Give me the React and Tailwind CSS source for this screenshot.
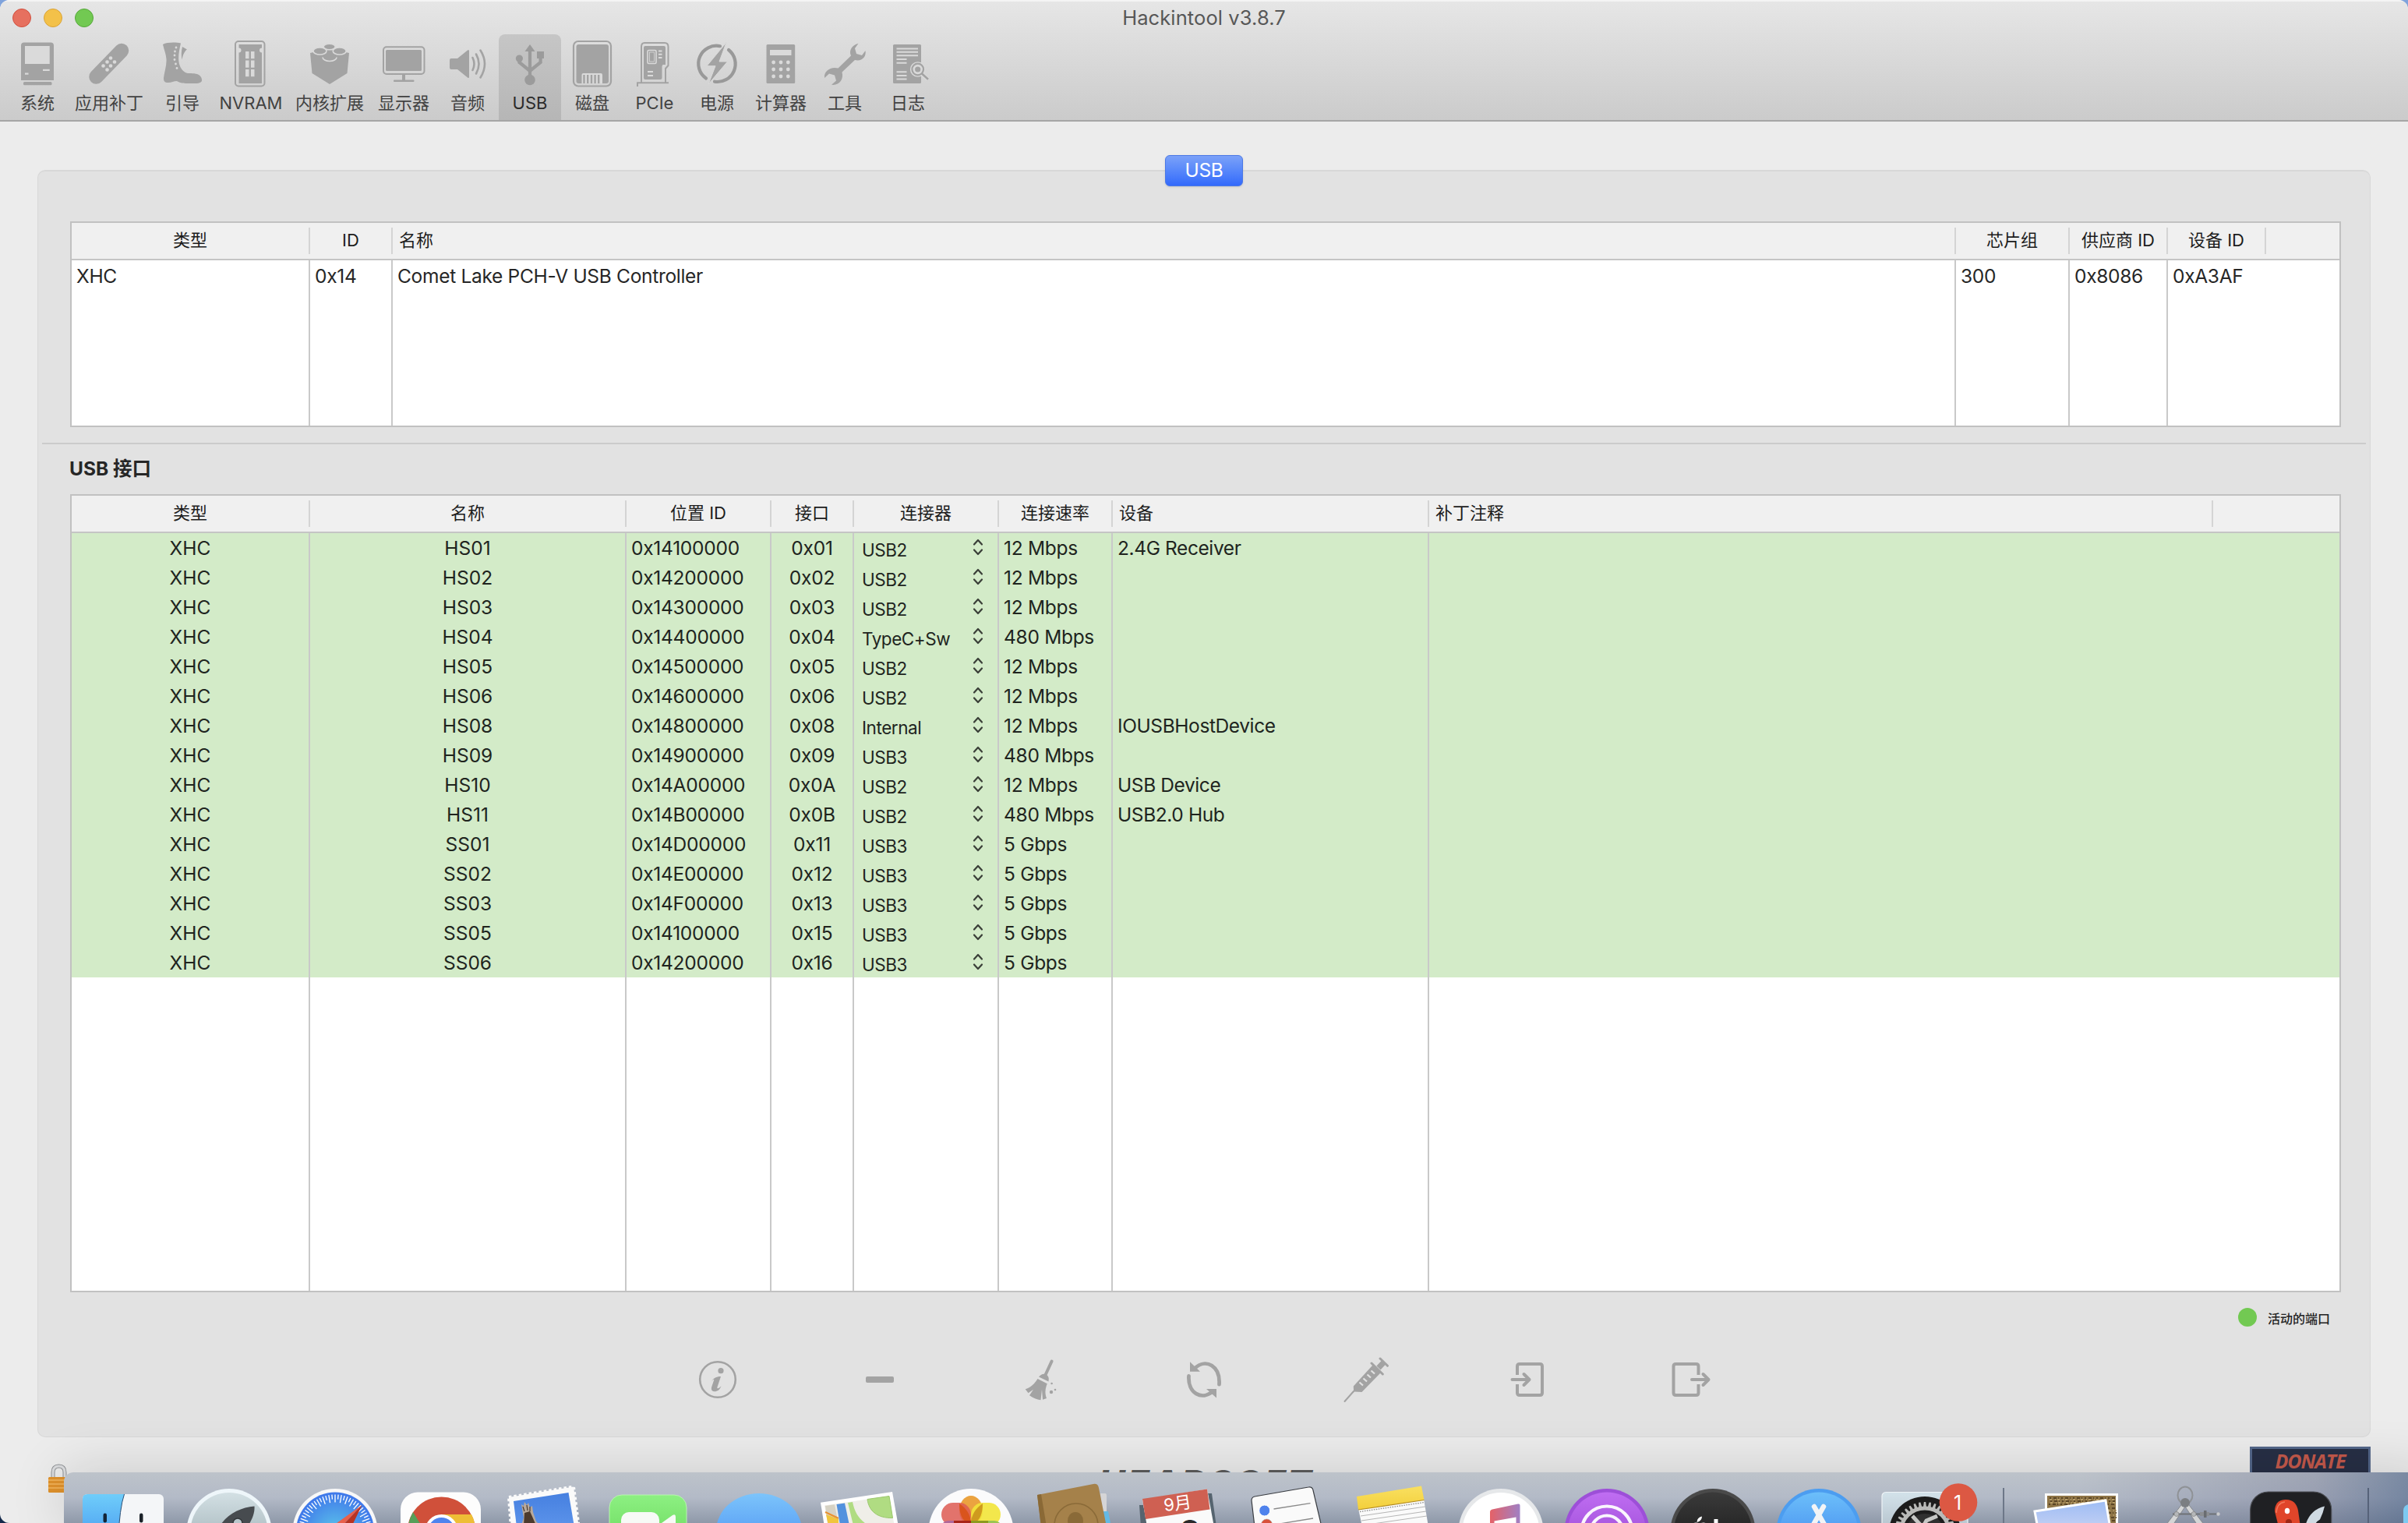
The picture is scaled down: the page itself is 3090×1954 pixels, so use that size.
import React from "react";

const LIGHT = "#dadada";

const toolbar = [
  {
    label: "系统", cx: 48, width: "w-[60px]",
    icon: (
      <>
        <path d="M31 54.5h34a4 4 0 0 1 4 4V103H27V58.500a4 4 0 0 1 4-4z" />
        <rect x="30" y="105" width="36.500" height="4.300" rx="1.500" />
        <g fill={LIGHT}>
          <rect x="32" y="59" width="31.700" height="23" />
          <rect x="55" y="88.800" width="8.700" height="2.200" />
          <rect x="32" y="93.500" width="4.500" height="2.200" />
        </g>
      </>
    ),
  },
  {
    label: "应用补丁", cx: 140, width: "w-[124px]",
    icon: (
      <>
        <path d="M123.500 98.500 156 65" stroke="currentColor" strokeWidth="18.500" strokeLinecap="round" />
        <g fill={LIGHT}>
          {[[142, 74.5], [137.5, 79.5], [147, 79.5], [132.500, 84.500], [142, 84.500], [137.500, 89.500]].map(([x, y]) => (
            <circle key={x + "-" + y} cx={x} cy={y} r="2.300" />
          ))}
        </g>
      </>
    ),
  },
  {
    label: "引导", cx: 234, width: "w-[64px]",
    icon: (
      <>
        <path d="M209 57c5-3 17-3 23-1.500C230 64 228 74 230 82c2 7 6 11 11 12 8 0 17 0 18 8 1 6-8 5-15 5-8 0-12 0-17-3-4 0-7 2-11 2-5 0-6-2-6-6 1-8 4-16 3.500-24-.5-7-3-12-4.500-19z" />
        <path d="M234 60l6 3.500c-3 2-5 6-6.500 13-1-5-1-11 .5-16.500z" />
        <g fill={LIGHT}>
          {[[226, 61], [224.5, 66], [224, 71], [224, 76.500], [225.5, 82], [227, 87.500]].map(([x, y]) => (
            <circle key={y} cx={x} cy={y} r="1.400" />
          ))}
        </g>
      </>
    ),
  },
  {
    label: "NVRAM", cx: 322, width: "w-[112px]",
    icon: (
      <>
        <rect x="302" y="53" width="37.500" height="57.500" rx="4" fill="none" stroke="currentColor" strokeWidth="2" />
        <path d="M306.500 57h29.500v4.500a3 3 0 0 0 0 6V107h-29.500V67.500a3 3 0 0 0 0-6z" />
        <g fill={LIGHT}>
          {[66, 77.500, 89].map((y) => (
            <React.Fragment key={y}>
              <rect x="315" y={y} width="4.500" height="9.200" />
              <rect x="322" y={y} width="4.500" height="9.200" />
            </React.Fragment>
          ))}
        </g>
      </>
    ),
  },
  {
    label: "内核扩展", cx: 423, width: "w-[90px]",
    icon: (
      <>
        <path d="M398 68l25-6 25 6-2.500 26L423 108l-22.500-14z" />
        <g stroke={LIGHT} strokeWidth="1.600">
          <ellipse cx="422.700" cy="60" rx="7.500" ry="3.800" />
          <ellipse cx="410.500" cy="65.500" rx="8.500" ry="4.500" />
          <ellipse cx="435.700" cy="65.500" rx="8.500" ry="4.500" />
          <path d="M414 73.500a9 5 0 0 0 18 0" fill="none" />
        </g>
      </>
    ),
  },
  {
    label: "显示器", cx: 518, width: "w-[100px]",
    icon: (
      <>
        <rect x="492" y="60.300" width="52.500" height="34.700" rx="4" fill="none" stroke="currentColor" strokeWidth="2" />
        <rect x="495" y="64" width="46" height="27" rx="1.500" />
        <rect x="516" y="95" width="4" height="8" />
        <rect x="505" y="102.500" width="26.500" height="2.500" rx="1" />
      </>
    ),
  },
  {
    label: "音频", cx: 600, width: "w-[64px]",
    icon: (
      <>
        <path d="M579 75h8l13-10.500q2-1.500 2 1V98.500q0 2.500-2 1L587 89h-8q-2 0-2-2V77q0-2 2-2z" />
        <g fill="none" stroke="currentColor" strokeWidth="2.600" strokeLinecap="round">
          <path d="M606.500 74q4 8 0 16" />
          <path d="M611 69.500q7 12.500 0 25" />
          <path d="M616.500 64.500q11 17.500 0 35" />
        </g>
      </>
    ),
  },
  {
    label: "USB", cx: 680, width: "w-[80px]", selected: true,
    icon: (
      <>
        <path d="M680 57l6.500 9h-13z" />
        <circle cx="666.400" cy="75" r="4.600" />
        <rect x="689" y="66" width="9" height="9" />
        <circle cx="680" cy="102.500" r="6.800" />
        <g fill="none" stroke="currentColor" strokeWidth="4.200">
          <path d="M680 64v38" />
          <path d="M666.400 76v4l13.600 11 13.600-11v-6" />
        </g>
      </>
    ),
  },
  {
    label: "磁盘", cx: 760, width: "w-[80px]",
    icon: (
      <>
        <rect x="736" y="53" width="48" height="57.500" rx="6" fill="none" stroke="currentColor" strokeWidth="2.200" />
        <rect x="739.500" y="57" width="41.500" height="50" rx="3" />
        <path d="M746.500 107V96q0-2 2-2h22.500q2 0 2 2v11z" fill={LIGHT} />
        <path d="M749.500 96v11M754.200 96v11M759 96v11M763.600 96v11M768.200 96v11" stroke="currentColor" strokeWidth="2.400" />
      </>
    ),
  },
  {
    label: "PCIe", cx: 840, width: "w-[80px]",
    icon: (
      <>
        <path d="M823 106V60q0-5 4-5h26q4.500 0 4.500 5v24l-3.500 4v18" fill="none" stroke="currentColor" strokeWidth="2" />
        <path d="M828 59h24q2 0 2 2v22h-3.500l-1 2v15q0 2-2 2H828q-2 0-2-2V61q0-2 2-2z" />
        <path d="M858 106.300H818V111" fill="none" stroke="currentColor" strokeWidth="2" />
        <rect x="831" y="64.500" width="11" height="17" rx="1.500" fill="none" stroke={LIGHT} strokeWidth="1.600" />
        <rect x="833.500" y="67" width="6" height="12" fill="currentColor" stroke={LIGHT} strokeWidth=".8" />
        <path d="M845 65.500h4.500M845 69.800h4.500M845 74h4.500M831 92h7M831 97h7" stroke={LIGHT} strokeWidth="1.900" />
      </>
    ),
  },
  {
    label: "电源", cx: 920, width: "w-[80px]",
    icon: (
      <>
        <path d="M924 59.200A23 23 0 0 0 906 100.500M917 104.700A23 23 0 0 0 935 64" fill="none" stroke="#999" strokeWidth="4.200" strokeLinecap="round" />
        <path d="M932 54.500L907 84.700h11L909 108l24.500-29H923z" stroke={LIGHT} strokeWidth="1" />
      </>
    ),
  },
  {
    label: "计算器", cx: 1002, width: "w-[84px]",
    icon: (
      <>
        <rect x="983.500" y="57" width="36.700" height="50" rx="1.500" />
        <g fill={LIGHT}>
          <rect x="988" y="64" width="27.500" height="7" />
          {[80, 89, 98].map((y) => [992.6, 1002, 1011.3].map((x) => <circle key={x + "-" + y} cx={x} cy={y} r="2.400" />))}
        </g>
      </>
    ),
  },
  {
    label: "工具", cx: 1084, width: "w-[80px]",
    icon: (
      <path d="M1101.500 55.800C1093 58 1089 65 1092 71.500L1075.500 87.500C1066 85 1057 91 1058 100L1064 94.500 1071 96.500 1073 103.500 1067 108.800C1077 110 1083 102 1080.500 92.500L1097 77C1106 79 1112 73 1110.500 65L1106 71 1099 69 1097 62z" />
    ),
  },
  {
    label: "日志", cx: 1165, width: "w-[82px]",
    icon: (
      <>
        <rect x="1146" y="57" width="36" height="50" rx="1.500" />
        <path d="M1150.500 62.500h27.500M1150.500 66.800h27.500M1150.500 71.200h27.500M1150.500 76h13M1150.500 80.800h13M1150.500 92.300h13M1150.500 97h13M1150.500 101.500h13" stroke={LIGHT} strokeWidth="1.900" />
        <circle cx="1177.700" cy="89" r="9.800" fill={LIGHT} />
        <path d="M1183 95l7.500 6.500" stroke={LIGHT} strokeWidth="5" />
        <circle cx="1177.700" cy="89" r="7.300" fill="none" stroke="currentColor" strokeWidth="2.200" />
        <circle cx="1177.700" cy="89" r="3.600" />
        <path d="M1183 94.500l8 7.300" stroke="currentColor" strokeWidth="2.600" />
      </>
    ),
  },
];

function ToolbarItem({ item }) {
  return (
    <div className={`${item.width} ${item.selected ? "rounded-t-lg bg-gradient-to-b from-[#c6c6c6] to-[#b6b6b6] text-[#2b2b2b]" : "text-[#424242]"} ${item.label === "音频" ? "mr-2" : ""} flex h-[110px] flex-col items-center pt-1.5`}>
      <svg width="70" height="64" viewBox={`${item.cx - 35} 50 70 64`} fill="currentColor" className={item.selected ? "text-[#9b9b9b]" : "text-[#a3a3a3]"}>
        {item.icon}
      </svg>
      <span className="mt-[3px] whitespace-nowrap text-[22px] leading-[30px]">{item.label}</span>
    </div>
  );
}

const controllerCols = [
  { title: "类型", w: "w-[306px]", align: "justify-center", value: "XHC" },
  { title: "ID", w: "w-[106px]", align: "justify-center", value: "0x14" },
  { title: "名称", w: "w-[2006px]", align: "pl-2", value: "Comet Lake PCH-V USB Controller" },
  { title: "芯片组", w: "w-[146px]", align: "justify-center", value: "300" },
  { title: "供应商 ID", w: "w-[126px]", align: "justify-center", value: "0x8086" },
  { title: "设备 ID", w: "w-[126px]", bodyW: "w-[220px]", align: "justify-center", value: "0xA3AF" },
];

const portCols = [
  { title: "类型", w: "w-[306px]", align: "justify-center" },
  { title: "名称", w: "w-[406px]", align: "justify-center" },
  { title: "位置 ID", w: "w-[186px]", align: "justify-center" },
  { title: "接口", w: "w-[106px]", align: "justify-center" },
  { title: "连接器", w: "w-[186px]", align: "justify-center" },
  { title: "连接速率", w: "w-[146px]", align: "justify-center" },
  { title: "设备", w: "w-[406px]", align: "pl-2" },
  { title: "补丁注释", w: "w-[1006px]", align: "pl-2" },
];

const ports = [
  ["HS01", "0x14100000", "0x01", "USB2", "12 Mbps", "2.4G Receiver"],
  ["HS02", "0x14200000", "0x02", "USB2", "12 Mbps", ""],
  ["HS03", "0x14300000", "0x03", "USB2", "12 Mbps", ""],
  ["HS04", "0x14400000", "0x04", "TypeC+Sw", "480 Mbps", ""],
  ["HS05", "0x14500000", "0x05", "USB2", "12 Mbps", ""],
  ["HS06", "0x14600000", "0x06", "USB2", "12 Mbps", ""],
  ["HS08", "0x14800000", "0x08", "Internal", "12 Mbps", "IOUSBHostDevice"],
  ["HS09", "0x14900000", "0x09", "USB3", "480 Mbps", ""],
  ["HS10", "0x14A00000", "0x0A", "USB2", "12 Mbps", "USB Device"],
  ["HS11", "0x14B00000", "0x0B", "USB2", "480 Mbps", "USB2.0 Hub"],
  ["SS01", "0x14D00000", "0x11", "USB3", "5 Gbps", ""],
  ["SS02", "0x14E00000", "0x12", "USB3", "5 Gbps", ""],
  ["SS03", "0x14F00000", "0x13", "USB3", "5 Gbps", ""],
  ["SS05", "0x14100000", "0x15", "USB3", "5 Gbps", ""],
  ["SS06", "0x14200000", "0x16", "USB3", "5 Gbps", ""],
];

function HeaderRow({ cols }) {
  return (
    <div className="flex h-[48px] shrink-0 items-center border-b-2 border-[#c5c5c5] bg-[#f0f0f0] text-[22px] text-[#1c1c1c]">
      {cols.map((c) => (
        <div key={c.title} className={`${c.w} ${c.align} flex h-[34px] shrink-0 items-center whitespace-nowrap border-r-2 border-[#d4d4d4] pb-[2px]`}>
          {c.title}
        </div>
      ))}
    </div>
  );
}

const cell = "flex shrink-0 items-center whitespace-nowrap border-r-2 border-[#c9c9c9]";

function PortRow({ port }) {
  const [name, location, index, connector, speed, device] = port;
  return (
    <div className="flex h-[38px] shrink-0 bg-[#d3ebc8]">
      <div className={`${cell} w-[306px] justify-center pt-px`}>XHC</div>
      <div className={`${cell} w-[406px] justify-center pt-px`}>{name}</div>
      <div className={`${cell} w-[186px] pl-1.5 pt-px tracking-[-0.250px]`}>{location}</div>
      <div className={`${cell} w-[106px] justify-center pt-px tracking-[-0.2px]`}>{index}</div>
      <div className={`${cell} w-[186px] justify-between pl-2.5 pr-[18px] pt-px`}>
        <span className="pt-1 text-[22.500px] leading-8 tracking-[-0.450px]">{connector}</span>
        <svg width="14" height="22" viewBox="0 0 14 22" fill="none" stroke="#3a3f38" strokeWidth="2.200" strokeLinecap="round" strokeLinejoin="round" className="-mt-1">
          <path d="M2 7.500L7 2l5 5.500M2 14.500L7 20l5-5.500" />
        </svg>
      </div>
      <div className={`${cell} w-[146px] pl-1.5 pt-px tracking-[-0.3px]`}>{speed}</div>
      <div className={`${cell} w-[406px] pl-1.5 pt-px tracking-[-0.4px]`}>{device}</div>
    </div>
  );
}

const actions = [
  ["info",
    <>
      <circle cx="30" cy="30" r="22.800" fill="none" stroke="currentColor" strokeWidth="2.600" />
      <circle cx="34" cy="18.700" r="3.600" />
      <path d="M22 32.500c2-4 6-6.500 12-6.500L29.500 39.500c-.8 3 2 2.200 5-1.200-2 5-5 7-8.500 7-4 0-4.800-2.500-3.600-6.500l2.800-8.200c.4-1.500-1.400-.8-3.200 1.900z" />
    </>],
  ["remove", <rect x="12" y="26" width="36" height="8" rx="2" />],
  ["clean",
    <>
      <path d="M42.600 6.500L34.500 24" stroke="currentColor" strokeWidth="4" strokeLinecap="round" />
      <path d="M26 26.500q4-5 9-3.500 5 3 3.500 9.500z" />
      <path d="M24.500 29l12.300 6.300c-3 7-3 13-.8 18.700l-5 1.800-1-13-1.500 13.500c-5-.5-10-3-14.500-6l5-7.500-6.500 4.500-3.800-5c7-2 12-7 15.800-13.300z" />
      <circle cx="42.600" cy="35" r="1.300" /><circle cx="47" cy="43" r="1.300" /><circle cx="42" cy="46" r="2.200" />
    </>],
  ["refresh",
    <>
      <path d="M18 15.500C33 2 51 13 49.500 36M10.500 25.500C9 47 27 58 42 44.500" fill="none" stroke="currentColor" strokeWidth="4.800" strokeLinecap="round" />
      <path d="M12 7.300v12.400h13zM46 53.500V42H33z" />
    </>],
  ["inject",
    <>
      <path d="M2.500 58L14 45" stroke="currentColor" strokeWidth="2" strokeLinecap="round" />
      <path d="M13.800 38.500L38.200 11.700l10.500 9.500L24.500 46l-9.500-.5-4 3.500 3-5z" />
      <path d="M37 9l14.300 14M48 3l9.500 9.300" stroke="currentColor" strokeWidth="3" strokeLinecap="round" />
      <path d="M46 15l7-7.500" stroke="currentColor" strokeWidth="7" />
      <path d="M21.500 33.500l4.500 4M26.500 28.500l4.500 4M31.500 23.500l4.500 4M36.500 18.500l4.500 4" stroke="#e2e2e2" strokeWidth="2.200" />
    </>],
  ["import",
    <g fill="none" stroke="currentColor" strokeWidth="4">
      <path d="M16 24V13q0-3 3-3h26q3 0 3 3v34q0 3-3 3H19q-3 0-3-3V36" />
      <path d="M9.500 30H31M24.500 23l7 7-7 7" strokeLinecap="round" strokeLinejoin="round" />
    </g>],
  ["export",
    <g fill="none" stroke="currentColor" strokeWidth="4">
      <path d="M40.500 24V13q0-3-3-3H11.500q-3 0-3 3v34q0 3 3 3h26q3 0 3-3V36" />
      <path d="M32 30H53M46.500 23l7 7-7 7" strokeLinecap="round" strokeLinejoin="round" />
    </g>],
];

function Gradient({ id, from, to }) {
  return (
    <linearGradient id={id} x1="0" y1="0" x2="0" y2="1">
      <stop offset="0" stopColor={from} />
      <stop offset="1" stopColor={to} />
    </linearGradient>
  );
}

const ticks = Array.from({ length: 72 }, (_, i) => i * 5);
const teeth = Array.from({ length: 36 }, (_, i) => i * 10);

const dockIcons = [
  ["finder",
    <>
      <defs><Gradient id="fi" from="#6fcdfa" to="#4b9df0" /></defs>
      <rect x="16" y="28" width="104" height="60" rx="6" fill="#f4f6f8" />
      <path d="M22 28h47.500q-6 17-8 60H16V34q0-6 6-6z" fill="url(#fi)" />
      <path d="M69.500 28q-6 17-8 60" fill="none" stroke="#2c4f75" strokeWidth="1" />
      <rect x="42.500" y="52.500" width="4.500" height="12" rx="2.200" fill="#132437" />
      <rect x="89" y="52.500" width="4.500" height="12" rx="2.200" fill="#1b2229" />
    </>],
  ["launchpad",
    <>
      <defs><Gradient id="lp" from="#d3e0e4" to="#8ea0a6" /></defs>
      <circle cx="68" cy="75.500" r="54.500" fill="#eef6fa" />
      <circle cx="68" cy="75.500" r="49.500" fill="url(#lp)" />
      <path d="M100.500 43.500C84 45 68 52 58 66h36c4-7 7-14 6.500-22.500z" fill="#474b4f" />
      <circle cx="79" cy="65" r="6" fill="#b9c6cb" stroke="#33373a" strokeWidth="1.500" />
    </>],
  ["safari",
    <>
      <defs><radialGradient id="sf"><stop offset="0" stopColor="#5cc4ea" /><stop offset="1" stopColor="#3f78ea" /></radialGradient></defs>
      <circle cx="68" cy="75.500" r="54.500" fill="#f8f8f8" />
      <circle cx="68" cy="75.500" r="50" fill="url(#sf)" />
      {ticks.map((a, i) => (
        <path key={a} d={i % 2 ? "M68 28.500v6" : "M68 28.500v10"} stroke="#fff" strokeWidth="1.300" transform={`rotate(${a} 68 75.500)`} />
      ))}
      <path d="M102.500 42L66 68h12z" fill="#e8604c" />
      <path d="M102.500 42L78 68h12z" fill="#b83322" />
    </>],
  ["chrome",
    <>
      <rect x="16" y="25.500" width="103" height="80" rx="22" fill="#fdfdfd" />
      <circle cx="68.500" cy="75" r="43.500" fill="#d0503a" />
      <path d="M68 54h39a43 43 0 0 1 5 21H68z" fill="#eebe36" />
      <path d="M32 51L50 80H25q0-17 7-29z" fill="#56a05a" />
      <circle cx="68.500" cy="75" r="21" fill="#fff" />
      <circle cx="68.500" cy="75" r="17" fill="#4f83ee" />
    </>],
  ["mail",
    <>
      <defs><Gradient id="ml" from="#4680e0" to="#5c93ea" /></defs>
      <path d="M19 32l83-13.500L109 72H22z" fill="#fafafa" stroke="#fafafa" strokeWidth="4" strokeDasharray="3.500 3" />
      <path d="M25 37l70.500-11L103 70H29z" fill="url(#ml)" />
      <path d="M35 41l3 2 1-5 3 4 2-3 2 6 3-2 1 8 4 12 5 5H35l3-10z" fill="#b9a99a" />
      <path d="M39 52l7-2 8 18H38z" fill="#4c3a2d" />
      <path d="M37 44l2 6M42 42l1 7M46 44l0 6" stroke="#473b33" strokeWidth="1.200" />
    </>],
  ["facetime",
    <>
      <defs><Gradient id="ft" from="#8df082" to="#64d556" /></defs>
      <rect x="12" y="29" width="99" height="80" rx="16" fill="url(#ft)" stroke="#b9f3b2" strokeWidth="1" />
      <rect x="27" y="51" width="49" height="40" rx="10" fill="#f7faf6" />
      <path d="M79 65l14-10q4-2 4 2v16H79z" fill="#f7faf6" />
    </>],
  ["messages",
    <>
      <defs><Gradient id="ms" from="#7cc4fb" to="#3f83ef" /></defs>
      <ellipse cx="68" cy="75" rx="55" ry="48" fill="url(#ms)" />
    </>],
  ["maps",
    <>
      <path d="M11 38.700L103 25l8 45H16z" fill="#fff" />
      <path d="M16 42.500L99 30.500 106 70H21z" fill="#efeee8" />
      <path d="M17 43l12-1.800L34 66H20z" fill="#d6d2c4" />
      <path d="M18 54l16 6v8H21z" fill="#f1c53c" />
      <path d="M17 51l17 8" stroke="#e9912f" strokeWidth="2" />
      <path d="M31.500 41L42 39.500 48 68H36z" fill="#5291de" />
      <path d="M46 39l6-1c3 14 8 22 20 30H53z" fill="#b0dc82" />
      <path d="M71 34.500l28-4 4.500 28C84 59 73 50 71 34.500z" fill="#b0dc82" stroke="#9cc86e" strokeWidth="1" />
    </>],
  ["photos",
    <>
      <circle cx="68" cy="75.500" r="54.500" fill="#fbfbfc" />
      <ellipse cx="68" cy="49" rx="15" ry="19" fill="#eba340" />
      <rect x="30" y="39" width="38" height="30" rx="15" fill="#dd5a52" fillOpacity=".85" />
      <rect x="68" y="39" width="38" height="30" rx="15" fill="#f2e438" fillOpacity=".9" />
      <path d="M53 40q15 10 15 27-15-4-15-27z" fill="#d9541c" />
      <path d="M83 40q-15 10-15 27 15-4 15-27z" fill="#cf9a1e" />
      <rect x="29" y="62" width="34" height="20" rx="10" fill="#b0689a" />
      <rect x="73" y="62" width="35" height="20" rx="10" fill="#9ac552" />
      <path d="M46 62h22v6H46z" fill="#a82418" />
      <path d="M68 62h22v6H68z" fill="#8c9a1e" />
    </>],
  ["contacts",
    <>
      <path d="M98 27h6q2 0 2 3v22h-6z" fill="#d5d5d7" />
      <path d="M100 50h8l4 20h-10z" fill="#63b9e4" />
      <path d="M17 29l72-14q6-1 7 5l10 50H22z" fill="#a5814a" />
      <path d="M17 29l5-1 7 42h-7z" fill="#8a6936" />
      <circle cx="67" cy="68" r="28" fill="none" stroke="#8a6a38" strokeWidth="1.600" />
      <ellipse cx="66" cy="62" rx="10" ry="11" fill="#8a6a38" />
    </>],
  ["calendar",
    <>
      <path d="M12 42h5l6 28h-9zM100 27h5l6 43h-7z" fill="#56646f" />
      <path d="M16 35l83-13.500L108 70H22z" fill="#fafafa" />
      <path d="M16 34l83-12.500 3.500 26L20 60z" fill="#cf6052" />
      <text x="61" y="48" textAnchor="middle" fontSize="22" fill="#fff" transform="rotate(-8 60 40)">9月</text>
      <text x="77" y="95" textAnchor="middle" fontSize="46" fontWeight="500" fill="#2a2a2a">8</text>
    </>],
  ["reminders",
    <>
      <path d="M20 36q0-4 4-5l69-12q5-1 6 4l11 47H24z" fill="#fafafa" stroke="#3a3d42" strokeWidth="1.200" />
      <circle cx="36.700" cy="49" r="7" fill="#4f82ec" stroke="#fff" strokeWidth="1" />
      <circle cx="39.500" cy="67" r="7" fill="#d9503a" stroke="#aaa" strokeWidth=".6" />
      <path d="M48.500 47l47-7.300M56 66l43-7" stroke="#8a8a8a" strokeWidth="1.300" />
    </>],
  ["notes",
    <>
      <defs><Gradient id="nt" from="#f9e061" to="#f3cf3b" /></defs>
      <path d="M21 46l84-12 6 36H26z" fill="#fafafa" />
      <path d="M19 31l83-13.500 3.500 18L21 48z" fill="url(#nt)" />
      <path d="M21 48l84.500-12.500" stroke="#b48c20" strokeWidth="1.200" />
      <path d="M23 50.500l83-12" stroke="#888" strokeWidth="1.300" strokeDasharray="1.500 1.500" />
      <path d="M24 56l83-12M25 62l83-12M26 68l83-12" stroke="#b5b5b5" strokeWidth="1" />
    </>],
  ["music",
    <>
      <defs><linearGradient id="mu"><stop offset="0" stopColor="#e56167" /><stop offset="1" stopColor="#a080c4" /></linearGradient></defs>
      <circle cx="68" cy="75.500" r="54.500" fill="#e6e8ea" />
      <circle cx="68" cy="75.500" r="49.500" fill="#fff" />
      <path d="M54 51q0-3 3-3.500l33-7q2.500-.5 2.500 2V70h-5V57.500l-28 5V70H54z" fill="url(#mu)" />
    </>],
  ["podcasts",
    <>
      <defs><Gradient id="pc" from="#bf6df2" to="#9040ca" /></defs>
      <circle cx="68" cy="75.500" r="54.500" fill="#9d4fd8" />
      <circle cx="68" cy="75.500" r="50" fill="url(#pc)" />
      <circle cx="68" cy="76" r="32.500" fill="none" stroke="#faf6fd" strokeWidth="4.200" />
      <circle cx="68" cy="76" r="20.500" fill="none" stroke="#faf6fd" strokeWidth="4.200" />
    </>],
  ["tv",
    <>
      <defs><Gradient id="tv" from="#3a3a3a" to="#101010" /></defs>
      <circle cx="68" cy="75.500" r="54.500" fill="#4a4a4a" />
      <circle cx="68" cy="75.500" r="50" fill="url(#tv)" />
      <path d="M54 56.500q0 6-6.500 7.500 0-6 6.500-7.500zM40 70q2-8 11-4.500 8-3 9 2z" fill="#fff" />
      <rect x="69.500" y="60" width="5" height="10" fill="#fff" />
    </>],
  ["appstore",
    <>
      <defs><Gradient id="as" from="#6cbffa" to="#3678ea" /></defs>
      <circle cx="68" cy="75.500" r="54.500" fill="#4c9df0" />
      <circle cx="68" cy="75.500" r="50" fill="url(#as)" />
      <path d="M62 44l17 30M74 44L56 76" stroke="#f2f4f6" strokeWidth="6.500" strokeLinecap="round" />
    </>],
  ["settings",
    <>
      <defs><Gradient id="st" from="#d3e2ea" to="#aebbc5" /></defs>
      <rect x="13" y="25.500" width="110" height="60" rx="5" fill="url(#st)" stroke="#eef4f7" strokeWidth="1.200" />
      <circle cx="68" cy="77" r="46" fill="#1c1c1c" />
      <circle cx="68" cy="77" r="31" fill="none" stroke="#b9bab8" strokeWidth="5" />
      {teeth.map((a) => <path key={a} d="M65.800 46l1-8h2.400l1 8z" fill="#b9bab8" transform={`rotate(${a} 68 77)`} />)}
      <circle cx="68" cy="77" r="24" fill="#303030" />
      <path d="M52 56l20 22M84 56L70 62l-8 14" stroke="#c6c7c5" strokeWidth="5" fill="none" />
      <circle cx="111" cy="38.500" r="24.300" fill="#dc5843" />
      <text x="110" y="47.500" textAnchor="middle" fontSize="25" fill="#fff">1</text>
    </>],
];

const extraIcons = [
  ["preview",
    <>
      <defs><Gradient id="pv" from="#9dbcf5" to="#c3d0f3" /></defs>
      <rect x="25.500" y="28.500" width="91" height="60" fill="#8f7547" stroke="#fafafa" strokeWidth="3" />
      <path d="M30 33h85M31 37h83M29 41h86M90 46h26M100 52h16M104 58h12M105 62h11" stroke="#5a4526" strokeWidth="2" strokeDasharray="2 3 4 2 1 3" />
      <path d="M30 35h85M31 39h83M95 49h21M105 55h11" stroke="#c5aa74" strokeWidth="1.600" strokeDasharray="3 4 1 2" />
      <path d="M11 50l91-14 6 36H15z" fill="url(#pv)" stroke="#fff" strokeWidth="3" />
    </>],
  ["compass",
    <>
      <ellipse cx="68" cy="29.500" rx="9.500" ry="11" fill="none" stroke="#8f9296" strokeWidth="2" />
      <path d="M66 38L43 68h9l16-24 16 24h9L70 38z" fill="#d4d5d6" stroke="#85888c" strokeWidth="1" />
      <circle cx="68" cy="39" r="6" fill="#7b7e82" />
      <path d="M52 53.500h60" stroke="#6f7276" strokeWidth="1.800" />
      <rect x="87" y="51" width="12" height="5" fill="#8b8e92" /><rect x="92" y="49" width="3.500" height="9" fill="#6a6d71" />
      <circle cx="110.500" cy="53.500" r="2.200" fill="#c9cacc" />
      <circle cx="57" cy="53.500" r="3" fill="#b5b7b9" stroke="#777" strokeWidth=".6" /><circle cx="79" cy="53.500" r="3" fill="#b5b7b9" stroke="#777" strokeWidth=".6" />
    </>],
  ["hackintool",
    <>
      <rect x="15.700" y="25" width="104" height="80" rx="23" fill="#1f2023" stroke="#4a4c52" strokeWidth="1.200" />
      <path d="M47 50q0-14 13-15 14-1 17 14l3 21H52z" fill="#e0452a" />
      <path d="M49 52q1-13 11-14" fill="none" stroke="#f27a5c" strokeWidth="1.500" />
      <ellipse cx="63" cy="49.500" rx="3.200" ry="3.800" fill="#fff" />
      <circle cx="65" cy="64" r="4" fill="#9c2615" />
      <path d="M111 43.500q-20 5-25 26h13q-1-5 6-9 4-8 6-17z" fill="#cfdae2" />
    </>],
];

function DockIcon({ children }) {
  return (
    <svg width="136" height="65" viewBox="0 0 136 65" className="shrink-0">
      {children}
    </svg>
  );
}

export default function App() {
  return (
    <div className="relative h-[1954px] w-[3090px] overflow-hidden bg-gradient-to-b from-[#7fa3dc] to-[#14284a] font-['Inter','Noto_Sans_CJK_SC',sans-serif]">
      <div className="flex h-[1954px] flex-col overflow-hidden rounded-xl bg-[#ececec]">
        <header className="h-[156px] shrink-0 border-b-2 border-t-2 border-b-[#a6a6a6] border-t-[#f4f4f4] bg-gradient-to-b from-[#e6e6e6] to-[#cbcbcb]">
          <div className="grid h-[42px] grid-cols-3 items-center">
            <div className="flex gap-4 pl-4">
              <span className="h-6 w-6 rounded-full border border-[#d1503f] bg-[#e6705f]" />
              <span className="h-6 w-6 rounded-full border border-[#d9a338] bg-[#f3c149]" />
              <span className="h-6 w-6 rounded-full border border-[#56a73b] bg-[#72c952]" />
            </div>
            <h1 className="text-center text-[25.500px] leading-[42px] tracking-[0.1px] text-[#575757]">Hackintool v3.8.7</h1>
          </div>
          <nav className="flex pl-[18px]">
            {toolbar.map((item) => <ToolbarItem key={item.label} item={item} />)}
          </nav>
        </header>

        <main className="mx-12 mt-[62px] flex h-[1626px] w-[2994px] shrink-0 flex-col rounded-[10px] border border-t-2 border-[#d8d8d8] bg-[#e2e2e2]">
          <div className="-mt-[21px] flex h-10 justify-center">
            <button className="h-10 w-[100px] rounded-md border border-[#4a78e6] bg-gradient-to-b from-[#7ba1f8] to-[#3369fb] pb-0.5 text-[24.500px] leading-[34px] tracking-[-0.4px] text-white shadow-sm">USB</button>
          </div>

          <section className="ml-[41px] mt-[45px] flex h-[264px] w-[2914px] shrink-0 flex-col border-2 border-[#c1c1c1] bg-white">
            <HeaderRow cols={controllerCols} />
            <div className="flex flex-1 text-[24.500px] tracking-[-0.3px] text-[#262626]">
              {controllerCols.map((c, i) => (
                <div key={c.title} className={`${c.bodyW || c.w} ${i < 5 ? "border-r-2" : ""} shrink-0 whitespace-nowrap border-[#c9c9c9] pl-1.5 pt-px leading-[38px]`}>
                  {c.value}
                </div>
              ))}
            </div>
          </section>

          <div className="mx-[5px] mt-5 h-0.5 shrink-0 bg-[#cbcbcb]" />

          <h2 className="ml-10 mt-[13px] h-9 text-[24.500px] font-bold leading-9 text-[#262626]">USB 接口</h2>

          <section className="ml-[41px] mt-[15px] flex h-[1024px] w-[2914px] shrink-0 flex-col border-2 border-[#c1c1c1] bg-white">
            <HeaderRow cols={portCols} />
            <div className="flex flex-1 flex-col text-[24.500px] text-[#20241e]">
              {ports.map((p) => <PortRow key={p[0]} port={p} />)}
              <div className="flex flex-1">
                {portCols.slice(0, 7).map((c) => <div key={c.title} className={`${cell} ${c.w}`} />)}
              </div>
            </div>
          </section>

          <div className="mr-[51px] mt-5 flex h-6 items-center justify-end gap-3.5">
            <span className="h-6 w-6 rounded-full bg-[#72c952]" />
            <span className="pt-1 text-[16px] font-medium leading-5 text-[#222]">活动的端口</span>
          </div>

          <div className="mt-[38px] flex justify-center gap-[148px] text-[#a3a3a3]">
            {actions.map(([name, shape]) => (
              <svg key={name} width="60" height="60" viewBox="0 0 60 60" fill="currentColor">{shape}</svg>
            ))}
          </div>
        </main>

        <footer className="flex h-[110px] shrink-0 justify-between px-12 pt-3">
          <svg width="60" height="70" viewBox="0 0 60 70" className="mt-4">
            <path d="M20 26V17q0-8 7.500-8T35 17v9" fill="none" stroke="#8f9296" strokeWidth="5" />
            <path d="M20 26V17q0-8 7.500-8T35 17v9" fill="none" stroke="#dcdddf" strokeWidth="3" />
            <rect x="14" y="23" width="28" height="20" rx="1.500" fill="#e0922c" />
            <path d="M14 27h28M14 32h28M14 37h28" stroke="#f0ae52" strokeWidth="1.800" />
          </svg>
          <div className="ml-[100px] mt-[19px] text-[46px] font-extrabold italic leading-[56px] tracking-[2.600px] text-[#5c5c5c]">HEADSOFT</div>
          <div className="flex h-[60px] w-[155px] justify-center border-[3px] border-[#536689] bg-[#272f45] font-['Open_Sans',sans-serif] text-[25px] font-bold italic leading-[31px] tracking-[-1.100px] text-[#c4594b]">DONATE</div>
        </footer>
      </div>

      <div className="absolute bottom-0 left-[82px] flex h-[65px] w-[3040px] overflow-visible rounded-tl-xl bg-gradient-to-b from-[#bdc3ca] via-[#b3bac7] to-[#8f99a9] shadow-[0_0_70px_rgba(0,0,0,0.16)]">
        <div className="flex h-[65px] w-[3040px] rounded-tl-xl bg-gradient-to-r from-transparent from-85% via-[#5a5f80]/30 via-95% to-[#3c5880]/60 pl-2">
          {dockIcons.map(([name, shape]) => <DockIcon key={name}>{shape}</DockIcon>)}
          <div className="flex w-[62px] shrink-0 justify-center pl-1 pt-5"><div className="h-[45px] w-0.5 bg-[#6d7788]" /></div>
          {extraIcons.map(([name, shape]) => <DockIcon key={name}>{shape}</DockIcon>)}
          <div className="flex w-[62px] shrink-0 justify-center pt-5"><div className="h-[45px] w-0.5 bg-[#566279]" /></div>
          <DockIcon><rect x="14" y="41" width="104" height="50" rx="8" fill="#7cc9f0" /></DockIcon>
        </div>
      </div>
    </div>
  );
}
